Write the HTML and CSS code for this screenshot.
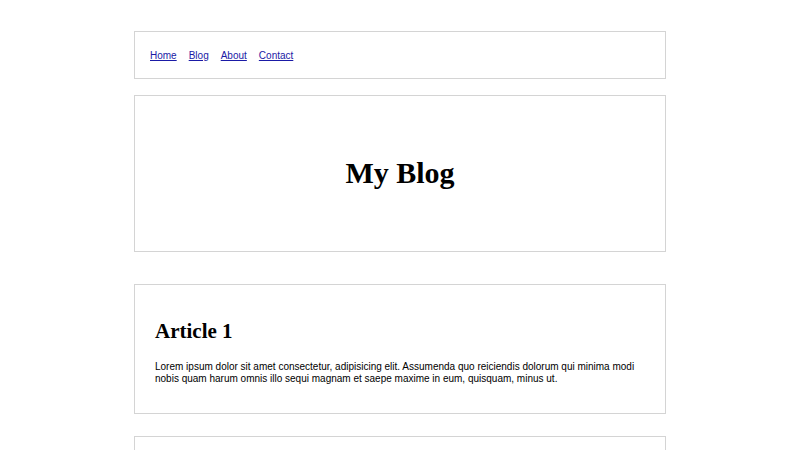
FILE: index.html
```html
<!DOCTYPE html>
<html lang="en">
<head>
<meta charset="utf-8">
<title>My Blog</title>
<link rel="stylesheet" href="styles.css">
</head>
<body>
<div class="page">
  <nav class="nav box">
    <a href="#">Home</a>
    <a href="#">Blog</a>
    <a href="#">About</a>
    <a href="#">Contact</a>
  </nav>
  <header class="hero box">
    <h1>My Blog</h1>
  </header>
  <article class="post box">
    <h2>Article 1</h2>
    <p>Lorem ipsum dolor sit amet consectetur, adipisicing elit. Assumenda quo reiciendis dolorum qui minima modi nobis quam harum omnis illo sequi magnam et saepe maxime in eum, quisquam, minus ut.</p>
  </article>
  <article class="post box">
    <h2>Article 2</h2>
    <p>Lorem ipsum dolor sit amet consectetur, adipisicing elit. Assumenda quo reiciendis dolorum qui minima modi nobis quam harum omnis illo sequi magnam et saepe maxime in eum, quisquam, minus ut.</p>
  </article>
</div>
</body>
</html>
```

FILE: styles.css
```css
* { box-sizing: border-box; }
html, body { margin: 0; padding: 0; background: #fff; }
body { font-family: "Liberation Sans", Arial, sans-serif; color: #000; }

.page {
  width: 532px;
  margin: 31px auto 0;
  display: flex;
  flex-direction: column;
}

.box { border: 1px solid #d4d4d4; background: #fff; }

.nav {
  height: 48px;
  display: flex;
  align-items: center;
  gap: 12px;
  padding: 0 15px;
  font-size: 10px;
}
.nav a { color: #1a1aa6; text-decoration: underline; }

.hero {
  margin-top: 16px;
  height: 157px;
  display: flex;
  align-items: center;
  justify-content: center;
}
.hero h1 {
  margin: 0 0 2px;
  font-family: "Liberation Serif", "Times New Roman", serif;
  font-weight: bold;
  font-size: 30px;
  line-height: 32px;
}

.post { padding: 34px 20px 29px; margin-top: 32px; }
.post + .post { margin-top: 22px; }
.post h2 {
  margin: 0;
  font-family: "Liberation Serif", "Times New Roman", serif;
  font-weight: bold;
  font-size: 21px;
  line-height: 24px;
}
.post p {
  margin: 18px 0 0;
  font-size: 10px;
  line-height: 11.5px;
}
```
